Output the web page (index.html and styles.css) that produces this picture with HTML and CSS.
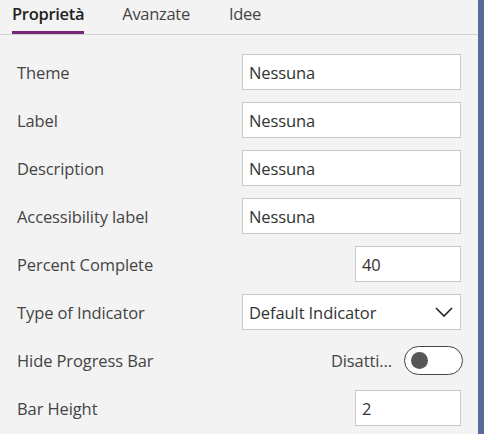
FILE: index.html
```html
<!DOCTYPE html>
<html>
<head>
<meta charset="utf-8">
<link rel="stylesheet" href="styles.css">
</head>
<body>
<div class="app">
  <div class="panel">
    <div class="tabs">
      <div class="tab active">Proprietà</div>
      <div class="tab">Avanzate</div>
      <div class="tab">Idee</div>
    </div>
    <div class="rows">
      <div class="row"><span class="label">Theme</span><div class="input wide">Nessuna</div></div>
      <div class="row"><span class="label">Label</span><div class="input wide">Nessuna</div></div>
      <div class="row"><span class="label">Description</span><div class="input wide">Nessuna</div></div>
      <div class="row"><span class="label">Accessibility label</span><div class="input wide">Nessuna</div></div>
      <div class="row"><span class="label">Percent Complete</span><div class="input narrow">40</div></div>
      <div class="row"><span class="label">Type of Indicator</span>
        <div class="input wide select">Default Indicator
          <svg class="chev" width="18" height="10" viewBox="0 0 18 10"><path d="M1 1 L9 9 L17 1" fill="none" stroke="#222" stroke-width="1.6"/></svg>
        </div>
      </div>
      <div class="row"><span class="label">Hide Progress Bar</span>
        <div class="toggle-wrap"><span class="toggle-text">Disatti...</span><div class="toggle"><div class="knob"></div></div></div>
      </div>
      <div class="row"><span class="label">Bar Height</span><div class="input narrow">2</div></div>
    </div>
  </div>
  <div class="strip"></div>
</div>
</body>
</html>
```
FILE: styles.css
```css
html, body { margin: 0; padding: 0; }
body {
  width: 484px; height: 434px; overflow: hidden;
  background: #f3f3f3;
  font-family: "Open Sans", "Noto Sans", sans-serif;
  color: #444;
}
.app { display: flex; height: 434px; }
.panel { flex: 1; }
.strip { width: 6px; background: #5a6b9b; }
.tabs {
  display: flex;
  border-bottom: 1px solid #d2d2d2;
  padding-left: 12px;
  box-sizing: border-box;
  height: 35px;
}
.tab {
  font-size: 16.5px; color: #444;
  margin-right: 39px;
  padding-top: 2px;
  box-sizing: border-box;
  height: 34px;
  letter-spacing: -0.3px;
}
.tab.active { font-weight: 600; color: #222; border-bottom: 3px solid #742774; margin-right: 38px; }
.rows { padding: 19px 17px 0 17px; }
.row {
  display: flex; align-items: center; justify-content: space-between;
  height: 36px; margin-bottom: 12px;
}
.label { font-size: 16.5px; letter-spacing: -0.1px; color: #444; }
.input {
  height: 36px; box-sizing: border-box;
  border: 1px solid #c8c8c8; background: #fff;
  font-size: 16.5px; color: #333;
  display: flex; align-items: center; padding-left: 6px;
  letter-spacing: -0.1px;
}
.wide { width: 219px; }
.narrow { width: 106px; }
.select { justify-content: space-between; padding-right: 7px; }
.toggle-wrap { display: flex; align-items: center; }
.toggle-text { font-size: 16.5px; margin-right: 12px; letter-spacing: -0.1px; }
.toggle {
  width: 59px; height: 29px; box-sizing: border-box;
  border: 1px solid #444; border-radius: 15px; background: #fff;
  display: flex; align-items: center; padding-left: 6px; margin-right: -2px;
}
.knob { width: 17px; height: 17px; border-radius: 50%; background: #575757; }
```
